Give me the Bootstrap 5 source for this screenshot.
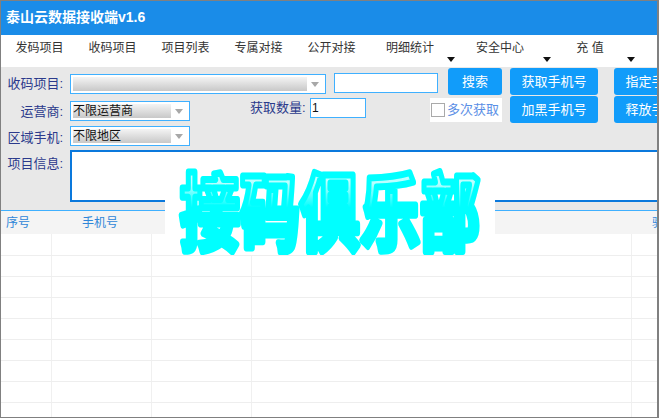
<!DOCTYPE html>
<html lang="zh-CN">
<head>
    <meta charset="UTF-8">
    <meta name="viewport" content="width=device-width, initial-scale=1.0">
    <title>泰山云数据接收端</title>
    <link href="https://cdn.jsdelivr.net/npm/bootstrap@5.3.0/dist/css/bootstrap.min.css" rel="stylesheet">
    <style>
        html, body { height: 100%; overflow: hidden; }
        body { font-family: "Liberation Sans", "Noto Sans CJK SC", sans-serif; font-size: 12px; background: #fff; }
        .app-window { width: 659px; height: 418px; border: 1px solid #808080; border-width: 1px 2px 1px 1px; position: relative; overflow: hidden; background: #fff; }
        .title-bar { height: 34px; background: #1a8ce8; color: #fff; font-size: 14px; font-weight: 700; padding: 0 0 2px 5px; }
        .menu-bar { height: 32px; padding-left: 2px; color: #333; }
        .menu-item { width: 73px; text-align: center; position: relative; line-height: 26px; height: 32px; }
        .menu-wide { width: 84px; }
        .menu-wider { width: 96px; }
        .menu-caret { position: absolute; right: -3px; bottom: 5px; width: 0; height: 0; border: 4px solid transparent; border-top: 5px solid #111; border-bottom: 0; }
        .form-area { background: #e8e8e8; height: 143px; padding-top: 1px; }
        .form-row { height: 28px; flex-wrap: nowrap; }
        .row-three { height: 26px; }
        .field-label { width: 62px; margin-right: 7px; flex: none; text-align: right; font-size: 13px; line-height: 20px; color: #2b3a8c; white-space: nowrap; }
        .label-first { margin-top: 6px; }
        .label-rest { margin-top: 4px; }
        .fake-select { height: 20px; flex: none; border: 1px solid #3fb0ff; background: #fff; position: relative; font-size: 12px; line-height: 18px; padding-left: 2px; color: #111; }
        .select-first { width: 256px; margin-top: 6px; }
        .select-next { width: 120px; margin-top: 5px; }
        .select-last { width: 120px; margin-top: 2px; }
        .fake-fill { position: absolute; left: 2px; right: 18px; top: 2px; bottom: 2px; background: linear-gradient(#f4f4f4, #c8c8c8); }
        .fake-text { position: relative; }
        .fake-arrow { position: absolute; right: 6px; top: 7px; width: 0; height: 0; border: 4px solid transparent; border-top: 5px solid #a8a8a8; border-bottom: 0; }
        .plain-input { height: 20px; flex: none; border: 1px solid #3fb0ff; background: #fff; font-size: 12px; line-height: 18px; padding: 0 1px; border-radius: 0; color: #111; }
        .input-search { width: 104px; margin: 5px 0 0 8px; }
        .input-count { width: 56px; margin: 2px 0 0 4px; }
        .count-label { width: 56px; flex: none; margin: 2px 0 0 60px; font-size: 13px; color: #2b3a8c; line-height: 20px; white-space: nowrap; }
        .sky-btn { background: #119cfa; color: #fff; font-size: 13px; height: 27px; flex: none; border: 0; border-radius: 3px; padding: 0; line-height: 27px; }
        .sky-btn:hover { background: #119cfa; color: #fff; }
        .btn-search { width: 54px; margin-left: 10px; }
        .btn-get { width: 88px; margin-left: 8px; }
        .btn-assign { width: 88px; margin-left: 16px; }
        .multi-box { width: 72px; height: 24px; flex: none; margin: 2px 0 0 64px; background: #fff; color: #5b8fe6; font-size: 13px; padding-left: 1px; white-space: nowrap; }
        .multi-check { width: 14px; height: 14px; border: 1px solid #aaa; background: #fff; margin-right: 2px; flex: none; }
        .info-box { height: 52px; border: 2px solid #0a78dc; border-right: 0; background: #fff; flex: 1; }
        .grid-wrap { border-top: 1px solid #3fb0ff; }
        .data-grid { table-layout: fixed; width: 680px; border-collapse: collapse; }
        .col-num { width: 50px; }
        .col-mid { width: 100px; }
        .col-long { width: 380px; }
        .col-end { width: 50px; }
        .data-grid th { height: 23px; background: #f4f4f4; color: #2f86d8; font-weight: 400; font-size: 12px; padding: 0 0 0 5px; overflow: hidden; white-space: nowrap; }
        .data-grid th.head-phone { padding-left: 31px; }
        .data-grid th.head-code { padding-left: 21px; }
        .data-grid td { height: 21px; border-right: 1px solid #f0f0f0; border-bottom: 1px solid #eeeeee; padding: 0; }
        .stamp-box { position: absolute; left: 164px; top: 164px; width: 330px; height: 90px; background: #fff; overflow: hidden; }
        .stamp-text { font-family: "Noto Sans CJK SC", sans-serif; font-weight: 700; font-size: 60px; stroke: #0ff; stroke-width: 5; stroke-linejoin: round; fill: url(#stampFill); }
    </style>
</head>
<body>
    <div class="app-window">
        <div class="title-bar d-flex align-items-center">泰山云数据接收端v1.6</div>

        <nav class="menu-bar d-flex">
            <div class="menu-item">发码项目</div>
            <div class="menu-item">收码项目</div>
            <div class="menu-item">项目列表</div>
            <div class="menu-item">专属对接</div>
            <div class="menu-item">公开对接</div>
            <div class="menu-item menu-wide">明细统计<span class="menu-caret"></span></div>
            <div class="menu-item menu-wider">安全中心<span class="menu-caret"></span></div>
            <div class="menu-item menu-wide">充 值<span class="menu-caret"></span></div>
        </nav>

        <div class="form-area">
            <div class="form-row d-flex align-items-start">
                <div class="field-label label-first">收码项目:</div>
                <div class="fake-select select-first"><span class="fake-fill"></span><span class="fake-arrow"></span></div>
                <input class="plain-input input-search" type="text">
                <button class="btn sky-btn btn-search">搜索</button>
                <button class="btn sky-btn btn-get">获取手机号</button>
                <button class="btn sky-btn btn-assign">指定手机号</button>
            </div>
            <div class="form-row d-flex align-items-start">
                <div class="field-label label-first">运营商:</div>
                <div class="fake-select select-next"><span class="fake-fill"></span><span class="fake-text">不限运营商</span><span class="fake-arrow"></span></div>
                <div class="count-label">获取数量:</div>
                <input class="plain-input input-count" type="text" value="1">
                <div class="multi-box d-flex align-items-center"><span class="multi-check"></span>多次获取</div>
                <button class="btn sky-btn btn-get">加黑手机号</button>
                <button class="btn sky-btn btn-assign">释放手机号</button>
            </div>
            <div class="form-row row-three d-flex align-items-start">
                <div class="field-label label-rest">区域手机:</div>
                <div class="fake-select select-last"><span class="fake-fill"></span><span class="fake-text">不限地区</span><span class="fake-arrow"></span></div>
            </div>
            <div class="d-flex align-items-start">
                <div class="field-label label-rest">项目信息:</div>
                <div class="info-box"></div>
            </div>
        </div>

        <div class="grid-wrap">
            <table class="data-grid">
                <colgroup>
                    <col class="col-num"><col class="col-mid"><col class="col-mid"><col class="col-long"><col class="col-end">
                </colgroup>
                <thead>
                    <tr><th>序号</th><th class="head-phone">手机号</th><th></th><th></th><th class="head-code">验证码</th></tr>
                </thead>
                <tbody id="gridBody"></tbody>
            </table>
        </div>

        <div class="stamp-box">
            <svg width="330" height="90" viewBox="0 0 330 90">
                <defs>
                    <linearGradient id="stampFill" x1="0" y1="0" x2="0" y2="1">
                        <stop offset="0" stop-color="#dff"/>
                        <stop offset="0.3" stop-color="#bff"/>
                        <stop offset="0.5" stop-color="#0ff"/>
                        <stop offset="1" stop-color="#0ff"/>
                    </linearGradient>
                </defs>
                <text class="stamp-text" x="15" y="68" textLength="300" lengthAdjust="spacingAndGlyphs" transform="translate(0 -16) scale(1 1.4)">接码俱乐部</text>
            </svg>
        </div>
    </div>

    <script>
        document.addEventListener('DOMContentLoaded', () => {
            const gridBody = document.getElementById('gridBody');
            for (let i = 0; i < 9; i++) {
                const row = gridBody.insertRow();
                for (let c = 0; c < 5; c++) row.insertCell();
            }
        });
    </script>
    <script src="https://cdn.jsdelivr.net/npm/bootstrap@5.3.0/dist/js/bootstrap.bundle.min.js"></script>
</body>
</html>
